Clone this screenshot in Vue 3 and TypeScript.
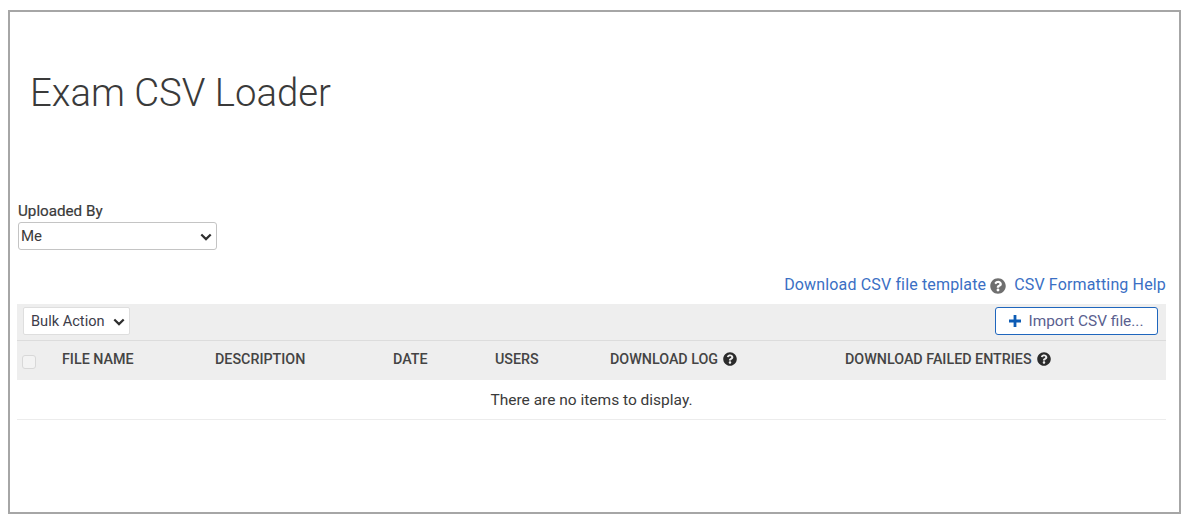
<script setup lang="ts">
const columns: { label: string; width: number; help?: boolean }[] = [
  { label: 'FILE NAME', width: 153 },
  { label: 'DESCRIPTION', width: 178 },
  { label: 'DATE', width: 102 },
  { label: 'USERS', width: 115 },
  { label: 'DOWNLOAD LOG', width: 235, help: true },
  { label: 'DOWNLOAD FAILED ENTRIES', width: 300, help: true },
]
const helpPath =
  'M504 256c0 136.997-111.043 248-248 248S8 392.997 8 256C8 119.083 119.043 8 256 8s248 111.083 248 248zM262.655 90c-54.497 0-89.255 22.957-116.549 63.758-3.536 5.286-2.353 12.415 2.715 16.258l34.699 26.31c5.205 3.947 12.621 3.008 16.665-2.122 17.864-22.658 30.113-35.797 57.303-35.797 20.429 0 45.698 13.148 45.698 32.958 0 14.976-12.363 22.667-32.534 33.976C247.128 238.528 216 254.941 216 296v4c0 6.627 5.373 12 12 12h56c6.627 0 12-5.373 12-12v-1.333c0-28.462 83.186-29.647 83.186-106.667 0-58.002-60.165-102-116.531-102zM256 338c-25.365 0-46 20.635-46 46 0 25.364 20.635 46 46 46s46-20.636 46-46c0-25.365-20.635-46-46-46z'
</script>

<template>
  <div class="frame">
    <h1 class="title">Exam CSV Loader</h1>

    <div class="filter">
      <label class="filter-label" for="uploaded">Uploaded By</label>
      <div class="select-wrap">
        <select id="uploaded" class="filter-select">
          <option>Me</option>
        </select>
        <svg class="chevron" viewBox="0 0 12 8"><path d="M1.3 1.5 6 6.1l4.7-4.6" fill="none" stroke="#2e2e2e" stroke-width="2.2" /></svg>
      </div>
    </div>

    <div class="links">
      <a class="link">Download CSV file template</a>
      <svg class="links-help" viewBox="0 0 512 512"><path :d="helpPath" fill="#6f6f6f" /></svg>
      <a class="link">CSV Formatting Help</a>
    </div>

    <div class="toolbar">
      <div class="select-wrap">
        <select class="bulk">
          <option>Bulk Action</option>
        </select>
        <svg class="chevron chevron-bulk" viewBox="0 0 12 8"><path d="M1.3 1.5 6 6.1l4.7-4.6" fill="none" stroke="#2e2e2e" stroke-width="2.2" /></svg>
      </div>
      <button class="import" type="button">
        <svg class="plus" viewBox="0 0 12 12"><path d="M4.6 0h2.8v4.6H12v2.8H7.4V12H4.6V7.4H0V4.6h4.6z" fill="#0d5cb5" /></svg>
        <span>Import CSV file...</span>
      </button>
    </div>

    <div class="head">
      <span class="check"></span>
      <div v-for="col in columns" :key="col.label" class="col" :style="{ width: col.width + 'px' }">
        <span>{{ col.label }}</span>
        <svg v-if="col.help" class="col-help" viewBox="0 0 512 512"><path :d="helpPath" fill="#2b2b2b" /></svg>
      </div>
    </div>

    <div class="empty">There are no items to display.</div>
  </div>
</template>

<style>
html,
body {
  margin: 0;
  background: #fff;
}
</style>

<style scoped>
.frame {
  box-sizing: border-box;
  width: 1173px;
  height: 504px;
  margin: 10px 0 0 8px;
  padding: 0 13px 0 7px;
  border: 2px solid #a6a6a6;
  font-family: Roboto, "Liberation Sans", sans-serif;
  font-size: 14px;
  color: #333;
}
.title {
  margin: 0;
  padding: 56px 0 0 13px;
  font-size: 38.3px;
  font-weight: 300;
  line-height: 50px;
  height: 50px;
  color: #3a3a3a;
}
.filter {
  margin-top: 83px;
  display: flex;
  flex-direction: column;
  align-items: flex-start;
}
.filter-label {
  margin-left: 1px;
  font-size: 15.2px;
  font-weight: 400;
  line-height: 20px;
  height: 20px;
  color: #3a3a3a;
  margin-bottom: 1px;
  -webkit-text-stroke: 0.2px #3a3a3a;
}
.select-wrap {
  position: relative;
  display: flex;
}
.filter-select {
  box-sizing: border-box;
  width: 199px;
  height: 28px;
  padding: 0 0 0 2px;
  margin-left: 1px;
  border: 1px solid #c4c4c4;
  border-radius: 3px;
  background-color: #fff;
  font-family: inherit;
  font-size: 15px;
  color: #3a3a3a;
  appearance: none;
}
.chevron {
  position: absolute;
  top: 11px;
  right: 5px;
  width: 12px;
  height: 8px;
  pointer-events: none;
}
.chevron-bulk {
  right: 5px;
}
.links {
  display: flex;
  justify-content: flex-end;
  align-items: center;
  height: 20px;
  margin-top: 24px;
  font-size: 16px;
}
.link {
  color: #3a6fc4;
  letter-spacing: 0.15px;
}
.links-help {
  width: 16px;
  height: 16px;
  margin: 3px 8px 0 4px;
}
.toolbar {
  display: flex;
  justify-content: space-between;
  align-items: center;
  box-sizing: border-box;
  height: 37px;
  margin-top: 10px;
  padding: 0 8px 2px 6px;
  background: #eeeeee;
  border-bottom: 1px solid #dcdcdc;
}
.bulk {
  box-sizing: border-box;
  width: 107px;
  height: 28px;
  padding: 0 0 0 7px;
  border: 1px solid #dedede;
  border-radius: 2px;
  background-color: #fff;
  font-family: inherit;
  font-size: 14.6px;
  color: #3d3d4a;
  appearance: none;
}
.import {
  display: flex;
  align-items: center;
  justify-content: center;
  gap: 8px;
  box-sizing: border-box;
  width: 163px;
  height: 28px;
  padding: 0;
  border: 1px solid #1f66bd;
  border-radius: 3px;
  background: #fff;
  font-family: inherit;
  font-size: 15.4px;
  color: #5a5f8f;
}
.plus {
  width: 12px;
  height: 12px;
  margin-left: -1px;
}
.head {
  display: flex;
  align-items: center;
  height: 39px;
  padding-bottom: 4px;
  box-sizing: border-box;
  background: #eeeeee;
  font-size: 14.3px;
  font-weight: 500;
  color: #444;
}
.check {
  box-sizing: border-box;
  width: 14px;
  height: 14px;
  margin: 6px 26px 0 5px;
  border: 1px solid #d8d8d8;
  border-radius: 3px;
  background: #f3f3f3;
}
.col {
  display: flex;
  align-items: center;
  gap: 5px;
  flex: none;
}
.col-help {
  width: 14px;
  height: 14px;
}
.empty {
  box-sizing: border-box;
  height: 40px;
  line-height: 41px;
  text-align: center;
  font-size: 15.5px;
  color: #3a3a3a;
  border-bottom: 1px solid #ececec;
}
</style>
